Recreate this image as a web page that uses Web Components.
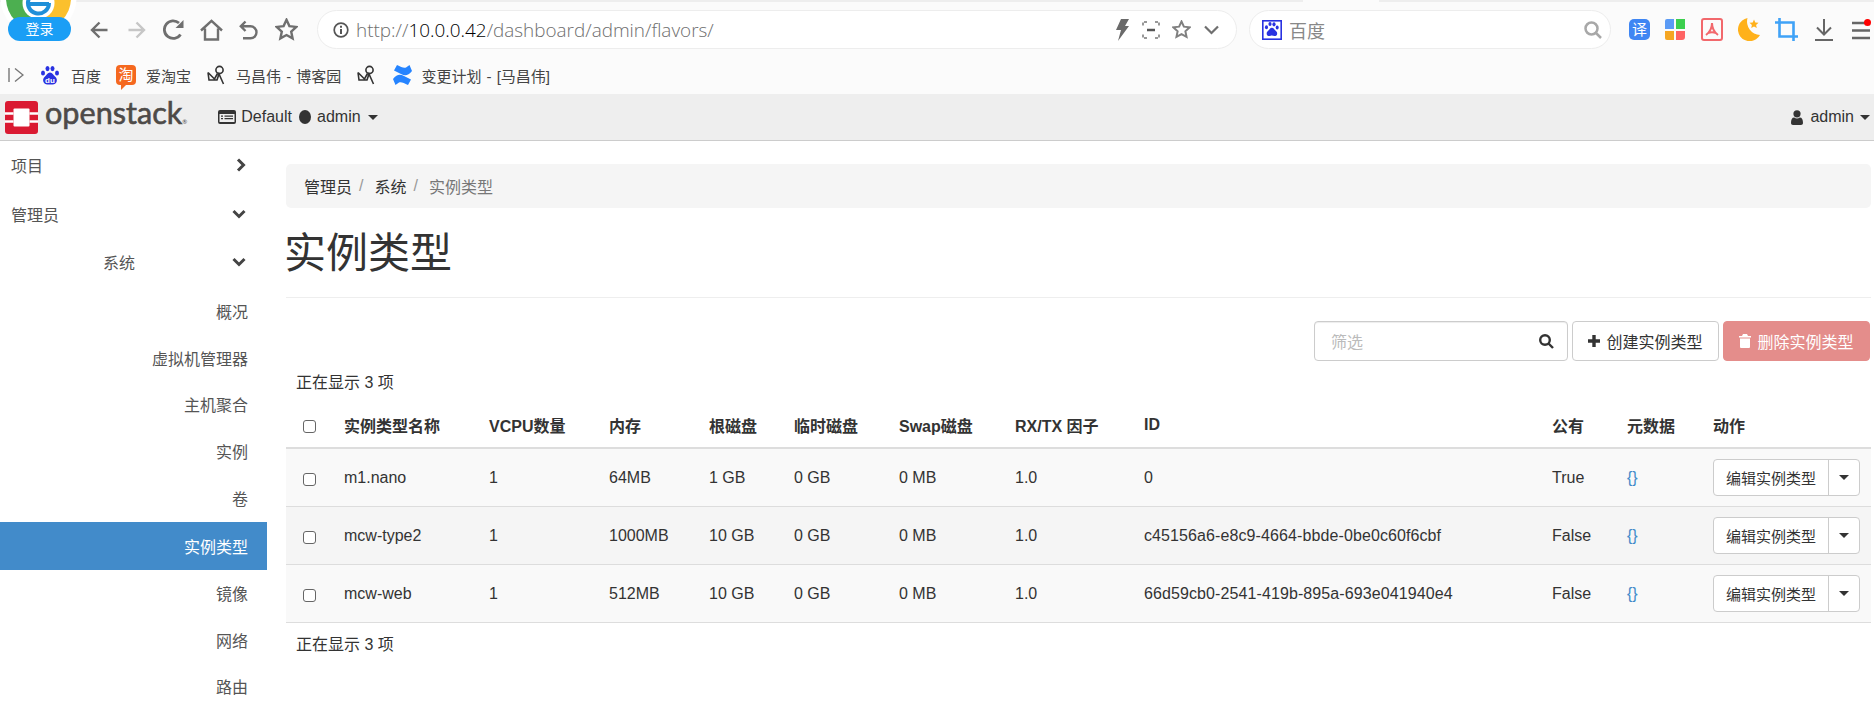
<!DOCTYPE html>
<html lang="zh-CN">

<head>
    <meta charset="UTF-8">
    <title>实例类型 - OpenStack Dashboard</title>
    <style>
        html, body { margin: 0; height: 705px; overflow: hidden; background: #fff; }
        body { font: 16px "Liberation Sans", "Noto Sans CJK SC", sans-serif; color: #333; }
        .page { display: flex; }
    </style>
</head>

<body>
    <browser-toolbar></browser-toolbar>
    <bookmark-bar></bookmark-bar>
    <os-navbar></os-navbar>
    <div class="page">
        <os-sidebar>
            <side-item level="1" chevron="right">项目</side-item>
            <side-item level="1" chevron="down">管理员</side-item>
            <side-item level="2" chevron="down">系统</side-item>
            <side-item>概况</side-item>
            <side-item>虚拟机管理器</side-item>
            <side-item>主机聚合</side-item>
            <side-item>实例</side-item>
            <side-item>卷</side-item>
            <side-item active>实例类型</side-item>
            <side-item>镜像</side-item>
            <side-item>网络</side-item>
            <side-item>路由</side-item>
        </os-sidebar>
        <flavor-page>
            <flavor-row name="m1.nano" mem="64MB" root="1 GB" eph="0 GB" swap="0 MB" rxtx="1.0" fid="0" pub="True"></flavor-row>
            <flavor-row name="mcw-type2" mem="1000MB" root="10 GB" eph="0 GB" swap="0 MB" rxtx="1.0" fid="c45156a6-e8c9-4664-bbde-0be0c60f6cbf" pub="False" hover></flavor-row>
            <flavor-row name="mcw-web" mem="512MB" root="10 GB" eph="0 GB" swap="0 MB" rxtx="1.0" fid="66d59cb0-2541-419b-895a-693e041940e4" pub="False"></flavor-row>
        </flavor-page>
    </div>

    <script>
        const SANS = '"Liberation Sans", "Noto Sans CJK SC", sans-serif';

        // 百度的爪子，工具栏用
        const PAW = `<ellipse cx="10" cy="5" rx="2" ry="2.6"/><ellipse cx="15" cy="5.4" rx="2" ry="2.6"/>
            <ellipse cx="5.6" cy="9" rx="1.9" ry="2.5"/><ellipse cx="19" cy="9.4" rx="1.9" ry="2.5"/>
            <path d="M12.4 9.6c-2.2 0-3 2.2-4.4 3.6-1.4 1.3-2.6 2.6-2 4.8.5 1.6 2 2.1 3.2 2 1.2-.1 2-.5 3.2-.5s2 .4 3.2.5c1.200.1 2.700-.4 3.200-2 .6-2.200-.6-3.500-2-4.800-1.400-1.400-2.200-3.600-4.400-3.600z"/>`;

        class BrowserToolbar extends HTMLElement {
            constructor() {
                super();
                const root = this.attachShadow({ mode: 'open' });
                root.innerHTML = `
                    <style>
                        :host { display: block; position: relative; height: 59px; background: #fbfbfb; box-sizing: border-box; border-top: 2px solid #eee; font-family: ${SANS}; }
                        .tab { position: absolute; left: 1303px; top: -2px; width: 76px; height: 2px; background: #fbfbfb; }
                        .row { display: flex; align-items: center; height: 57px; padding: 0 0 2px 90px; box-sizing: border-box; }
                        svg { display: block; flex: none; }
                        .nav { fill: none; stroke: #6f6f6f; stroke-width: 2.4; }
                        .pill { display: flex; align-items: center; height: 39px; box-sizing: border-box; border: 1px solid #ededed; border-radius: 20px; background: #fff; }
                        .url { width: 920px; margin-left: 19px; padding: 0 17px 0 15px; }
                        .addr { flex: 1; margin-left: 7px; font: 300 18.9px "Open Sans", "Liberation Sans", sans-serif; color: #6e6e6e; white-space: nowrap; }
                        .addr b { font-weight: 300; color: #000; }
                        .search { width: 362px; margin-left: 12px; padding: 0 8px 0 12px; }
                        .kw { flex: 1; margin-left: 7px; font-size: 18px; color: #888; }
                        .avatar { position: absolute; left: 0; top: -2px; }
                        .login { position: absolute; left: 8px; top: 15px; width: 63px; height: 24px; border-radius: 12px; background: #1a9ef5; color: #fff; font-size: 14px; line-height: 24px; text-align: center; }
                        .yi { width: 21px; height: 21px; border-radius: 5px; background: #3f86f3; color: #fff; font-size: 15px; line-height: 21px; text-align: center; }
                    </style>
                    <div class="tab"></div>
                    <svg class="avatar" width="78" height="24" viewBox="0 0 78 24">
                        <circle cx="38.500" cy="-2" r="38" fill="#fff"/>
                        <path d="M38.500-34.500a32.500 32.500 0 0 0 0 65z" fill="#4caf50"/>
                        <path d="M38.500-34.500a32.500 32.500 0 0 1 0 65z" fill="#fbc02d"/>
                        <circle cx="38.500" cy="3" r="16" fill="#fff"/>
                        <path d="M49-2a10.500 10.500 0 1 1-3.500-7.800M28-1h21" transform="translate(0 5)" fill="none" stroke="#1f8fd8" stroke-width="4"/>
                    </svg>
                    <div class="login">登录</div>
                    <div class="row">
                        <svg class="nav" width="18" height="18" viewBox="0 0 18 18"><path d="M17.500 9H2M9.500 1.500 2 9l7.500 7.500"/></svg>
                        <svg class="nav" style="margin-left:20px;stroke:#c6c6c6" width="18" height="18" viewBox="0 0 18 18"><path d="M.5 9H16M8.500 1.500 16 9l-7.500 7.500"/></svg>
                        <svg style="margin-left:17px" width="22" height="21" viewBox="0 0 22 21"><path d="M17.500 15.500A8.800 8.800 0 1 1 16 4" fill="none" stroke="#6f6f6f" stroke-width="2.800"/><path d="M20.500 1v8h-8z" fill="#6f6f6f"/></svg>
                        <svg class="nav" style="margin-left:15px" width="23" height="22" viewBox="0 0 23 22"><path d="M1 11.500 11.500 1.800 22 11.500M5 9.500v11h13v-11"/></svg>
                        <svg class="nav" style="margin-left:16px" width="19" height="20" viewBox="0 0 19 20"><path d="M6.500 1.500 1.800 6.300l4.700 4.700M2 6.300h9.500a6 6 0 0 1 0 12H4"/></svg>
                        <svg class="nav" style="margin-left:17px" width="23" height="23" viewBox="0 0 23 23"><path d="m11.500 1.800 2.900 6.300 6.900.8-5.100 4.700 1.400 6.800-6.100-3.400-6.100 3.400 1.400-6.800L1.700 8.900l6.900-.8z"/></svg>
                        <div class="pill url">
                            <svg width="16" height="16" viewBox="0 0 16 16"><circle cx="8" cy="8" r="6.800" fill="none" stroke="#555" stroke-width="1.700"/><path d="M7 7h2v5H7zM7 3.800h2v2H7z" fill="#555"/></svg>
                            <div class="addr">http://<b>10.0.0.42</b>/dashboard/admin/flavors/</div>
                            <svg width="13" height="22" viewBox="0 0 13 22"><path d="M5 0h8L9 7h4L2 22l3-11H0z" fill="#6a6a6a"/></svg>
                            <svg style="margin-left:13px" width="18" height="18" viewBox="0 0 18 18" fill="none" stroke="#777" stroke-width="1.500"><path d="M5 1H1v4M13 1h4v4M5 17H1v-4M13 17h4v-4" stroke-dasharray="3 1.500"/><path d="M5 9h8" stroke="#555" stroke-width="2.500"/></svg>
                            <svg style="margin-left:12px" width="19" height="19" viewBox="0 0 23 23" fill="none" stroke="#808080" stroke-width="2.400"><path d="m11.500 1.800 2.900 6.300 6.900.8-5.100 4.700 1.400 6.800-6.100-3.400-6.100 3.400 1.400-6.800L1.700 8.900l6.900-.8z"/></svg>
                            <svg style="margin-left:13px" width="15" height="10" viewBox="0 0 15 10" fill="none" stroke="#6f6f6f" stroke-width="2.200"><path d="m1 1.500 6.500 6.500L14 1.500"/></svg>
                        </div>
                        <div class="pill search">
                            <svg width="20" height="20" viewBox="0 0 25 25"><rect x="1" y="1" width="23" height="23" fill="#fff" stroke="#2932e1" stroke-width="2"/><g fill="#2932e1">${PAW}</g></svg>
                            <div class="kw">百度</div>
                            <svg width="18" height="18" viewBox="0 0 18 18" fill="none" stroke="#a8a8a8" stroke-width="2.500"><circle cx="7.500" cy="7.500" r="6"/><path d="m12 12 5 5"/></svg>
                        </div>
                        <div class="yi" style="margin-left:18px">译</div>
                        <svg style="margin-left:15px" width="20" height="21" viewBox="0 0 20 21"><path d="M2 0h7v10H0V2a2 2 0 0 1 2-2z" fill="#5b9bf5"/><path d="M11 0h9v10h-9z" fill="#3ccf4e"/><path d="M0 12h9v9H2a2 2 0 0 1-2-2z" fill="#f5a623"/><path d="M11 12h9v6a3 3 0 0 1-3 3h-6z" fill="#ff6464"/></svg>
                        <svg style="margin-left:16px" width="22" height="23" viewBox="0 0 22 23" fill="none" stroke="#f2686c"><rect x="1" y="1" width="20" height="21" rx="2" stroke-width="2"/><path d="M11 5c0 5-2 9-6 12M11 5c0 5 2 9 6 12M7 15c3-1 5-1 8 0" stroke-width="2"/></svg>
                        <svg style="margin-left:15px" width="22" height="23" viewBox="0 0 22 23"><path d="M9.500 0a11.700 11.700 0 1 0 12.500 17A13.500 13.500 0 0 1 9.500 0z" fill="#ffb11b"/><path d="m16 1.500 1.300 3 3.200.3-2.400 2.100.7 3.100-2.800-1.600-2.800 1.600.7-3.100-2.400-2.100 3.200-.3z" fill="#ffb11b"/></svg>
                        <svg style="margin-left:15px" width="23" height="23" viewBox="0 0 23 23" fill="none" stroke="#3fa2f7" stroke-width="2.600"><path d="M0 4.500h18.500V23"/><path d="M4.500 0v18.500H23"/></svg>
                        <svg style="margin-left:17px" width="18" height="22" viewBox="0 0 18 22" fill="none" stroke="#666" stroke-width="2"><path d="M9 0v15M2 8.500 9 15.500l7-7"/><path d="M0 21h18"/></svg>
                        <svg style="margin-left:19px" width="20" height="22" viewBox="0 0 20 22"><path d="M0 4h14M0 11.500h18M0 19h18" stroke="#666" stroke-width="2.500"/><circle cx="15.500" cy="3.500" r="3.500" fill="#f00"/></svg>
                    </div>
                `;
            }
        }
        customElements.define('browser-toolbar', BrowserToolbar);

        class BookmarkBar extends HTMLElement {
            constructor() {
                super();
                const bird = `<svg width="19" height="20" viewBox="0 0 19 20" fill="none" stroke="#333" stroke-width="1.600"><circle cx="12.500" cy="5" r="3.600"/><path d="M1 7.500 7.500 14 10.500 8.500M1 7.500 2 15h8l2-6 4.500 10"/></svg>`;
                const root = this.attachShadow({ mode: 'open' });
                root.innerHTML = `
                    <style>
                        :host { display: flex; align-items: center; height: 35px; box-sizing: border-box; padding: 0 0 3px 8px; background: #fbfbfb; font: 15px ${SANS}; color: #444; word-spacing: 1px; }
                        svg { display: block; flex: none; }
                        span { white-space: nowrap; }
                        .tao { position: relative; width: 20px; height: 20px; margin-left: 15px; border-radius: 4px; background: #f5681f; color: #fff; font-size: 15px; line-height: 20px; text-align: center; }
                        .tao::after { content: ""; position: absolute; left: 5px; top: 19px; border: 3px solid transparent; border-top-color: #f5681f; border-left-color: #f5681f; }
                    </style>
                    <svg width="16" height="16" viewBox="0 0 16 16" fill="none" stroke="#777" stroke-width="1.400"><path d="M1 1v14M7 1.500 15 8l-8 6.500"/></svg>
                    <svg style="margin-left:17px" width="18" height="19" viewBox="0 0 18 19" fill="#2932e1">
                        <ellipse cx="6.500" cy="2.600" rx="2" ry="2.600"/><ellipse cx="11.500" cy="2.600" rx="2" ry="2.600"/>
                        <ellipse cx="2" cy="7" rx="2" ry="2.500"/><ellipse cx="16" cy="7" rx="2" ry="2.500"/>
                        <path d="M9 6.500c-2.500 0-3.300 2.400-5 4-1.500 1.400-2.300 3-1.700 5 .6 2 2.300 3 4 3h5.400c1.700 0 3.400-1 4-3 .6-2-.2-3.600-1.700-5-1.700-1.600-2.500-4-5-4z"/>
                        <text x="9" y="16.500" text-anchor="middle" fill="#fff" font-size="8" font-weight="700" font-family="Liberation Sans, sans-serif" word-spacing="0">du</text>
                    </svg>
                    <span style="margin-left:12px">百度</span>
                    <div class="tao">淘</div>
                    <span style="margin-left:10px">爱淘宝</span>
                    <span style="margin-left:16px;display:block">${bird}</span>
                    <span style="margin-left:10px">马昌伟 - 博客园</span>
                    <span style="margin-left:16px;display:block">${bird}</span>
                    <svg style="margin-left:16px" width="21" height="22" viewBox="0 0 21 22" fill="#2684ff"><path d="M1 15c4-5 7-5 11-3l7 3.500-3 5.500c-4-2-7-3.500-9-2.500L3.500 21z"/><path d="M20 7c-4 5-7 5-11 3L2 6.500 5 1c4 2 7 3.500 9 2.500L17.500 1z"/></svg>
                    <span style="margin-left:8px">变更计划 - [马昌伟]</span>
                `;
            }
        }
        customElements.define('bookmark-bar', BookmarkBar);

        class OsNavbar extends HTMLElement {
            constructor() {
                super();
                const root = this.attachShadow({ mode: 'open' });
                root.innerHTML = `
                    <style>
                        :host { display: flex; align-items: center; height: 47px; box-sizing: border-box; padding: 0 4px 0 5px; background: #eee; border-bottom: 1px solid #ccc; font: 16px ${SANS}; color: #333; }
                        svg { display: block; flex: none; }
                        .brand { margin-left: 7px; font: 400 30.6px Lato, "Open Sans", sans-serif; color: #4d4a48; -webkit-text-stroke: .6px #4d4a48; line-height: 47px; white-space: nowrap; }
                        .brand sup { font-size: 6px; vertical-align: baseline; -webkit-text-stroke: 0; }
                        .dot { width: 12px; height: 14px; margin: 0 6px 0 7px; border-radius: 50%; background: #333; }
                        .caret { width: 0; height: 0; margin-left: 7px; border: 5px solid transparent; border-top-color: #333; border-bottom: 0; }
                        .grow { flex: 1; }
                    </style>
                    <svg width="33" height="33" viewBox="0 0 33 33">
                        <rect width="33" height="33" rx="3" fill="#da1a32"/>
                        <rect x="8.500" y="7.500" width="16" height="18" rx="1" fill="#fff"/>
                        <path d="M0 12.500h8.500M0 20.500h8.500M24.500 12.500H33M24.500 20.500H33" stroke="#fff" stroke-width="2.400"/>
                    </svg>
                    <span class="brand">openstack<sup>®</sup></span>
                    <svg style="margin-left:31px" width="18" height="14" viewBox="0 0 18 14" fill="#333"><path d="M0 2a2 2 0 0 1 2-2h14a2 2 0 0 1 2 2v10a2 2 0 0 1-2 2H2a2 2 0 0 1-2-2zm1.500 2v8h15V4zM3 5.500h2v1.300H3zm3.500 0H15v1.300H6.500zM3 8h2v1.300H3zm3.500 0H15v1.300H6.500z"/></svg>
                    <span style="margin-left:5px">Default</span>
                    <span class="dot"></span>
                    <span>admin</span>
                    <span class="caret"></span>
                    <span class="grow"></span>
                    <svg width="12" height="15" viewBox="0 0 12 15" fill="#333"><circle cx="6" cy="3.800" r="3.600"/><path d="M0 13c0-3.500 1-5.500 3.200-5.500 1.600 1.200 4 1.200 5.600 0C11 7.500 12 9.500 12 13c0 1.300-.8 2-2 2H2c-1.200 0-2-.7-2-2z"/></svg>
                    <span style="margin-left:7px">admin</span>
                    <span class="caret" style="margin-left:6px"></span>
                `;
            }
        }
        customElements.define('os-navbar', OsNavbar);

        class OsSidebar extends HTMLElement {
            constructor() {
                super();
                this.attachShadow({ mode: 'open' }).innerHTML = `
                    <style>:host { display: block; flex: none; width: 267px; height: 564px; overflow: hidden; }</style>
                    <slot></slot>
                `;
            }
        }
        customElements.define('os-sidebar', OsSidebar);

        class SideItem extends HTMLElement {
            constructor() {
                super();
                const chevron = this.getAttribute('chevron');
                const icons = {
                    right: '<svg width="10" height="14" viewBox="0 0 10 14"><path d="M2 1.500 7.500 7 2 12.500" fill="none" stroke="#444" stroke-width="3"/></svg>',
                    down: '<svg width="14" height="10" viewBox="0 0 14 10"><path d="M1.500 2 7 7.500 12.500 2" fill="none" stroke="#444" stroke-width="3"/></svg>'
                };
                this.attachShadow({ mode: 'open' }).innerHTML = `
                    <style>
                        :host { display: flex; align-items: center; height: 46.8px; box-sizing: border-box; padding: 0 19px 1px 11px; font-size: 16px; color: #555; justify-content: flex-end; }
                        :host([level="1"]), :host([level="2"]) { height: 49px; padding-bottom: 2px; justify-content: space-between; padding-right: 21px; }
                        :host([level="2"]) { padding-left: 103px; padding-bottom: 3px; }
                        :host([active]) { height: 48px; padding-bottom: 0; background: #428bca; color: #fff; }
                        svg { display: block; }
                    </style>
                    <span><slot></slot></span>
                    ${chevron ? icons[chevron] : ''}
                `;
            }
        }
        customElements.define('side-item', SideItem);

        class FlavorPage extends HTMLElement {
            constructor() {
                super();
                const hd = ['实例类型名称', 'VCPU数量', '内存', '根磁盘', '临时磁盘', 'Swap磁盘', 'RX/TX 因子', 'ID', '公有', '元数据', '动作'];
                this.attachShadow({ mode: 'open' }).innerHTML = `
                    <style>
                        :host { display: block; flex: 1; min-width: 0; padding: 23px 3px 0 19px; font-size: 16px; color: #333;
                            --flavor-cols: 58px 145px 120px 100px 85px 105px 116px 129px 408px 75px 86px 1fr; }
                        .crumb { display: flex; align-items: center; height: 44px; padding-left: 18px; border-radius: 5px; background: #f5f5f5; }
                        .crumb i { font-style: normal; color: #999; padding: 0 11px 0 7px; }
                        .crumb .cur { color: #777; }
                        h1 { margin: 0; height: 89px; border-bottom: 1px solid #eee; font-size: 42px; font-weight: 400; line-height: 91px; text-indent: -2px; }
                        .actions { display: flex; justify-content: flex-end; gap: 4px; margin: 23px 1px 0 0; }
                        .filter { display: flex; align-items: center; justify-content: space-between; width: 254px; height: 40px; box-sizing: border-box; margin-right: 0; padding: 0 13px 0 16px; border: 1px solid #ccc; border-radius: 4px; color: #bbb; box-shadow: inset 0 1px 1px rgba(0,0,0,.075); }
                        .btn { display: flex; align-items: center; justify-content: center; gap: 6px; width: 147px; height: 40px; box-sizing: border-box; border: 1px solid #ccc; border-radius: 4px; background: #fff; }
                        .btn.danger { background: #e48d8b; border-color: #e48d8b; color: #fff; gap: 6px; }
                        svg { display: block; }
                        .count { height: 22px; line-height: 22px; padding-left: 10px; }
                        .top { margin-top: 11px; }
                        .thead { display: grid; grid-template-columns: var(--flavor-cols); align-items: center; height: 44px; padding-top: 9px; border-bottom: 2px solid #ddd; font-weight: 700; }
                        .check { width: 13px; height: 13px; margin: 3px 0 0 17px; box-sizing: border-box; appearance: none; border: 1.500px solid #666; border-radius: 3px; background: #fff; }
                        .bottom { margin-top: 11px; }
                    </style>
                    <div class="crumb"><span>管理员</span><i>/</i><span>系统</span><i>/</i><span class="cur">实例类型</span></div>
                    <h1>实例类型</h1>
                    <div class="actions">
                        <div class="filter"><span>筛选</span><svg width="15" height="15" viewBox="0 0 15 15" fill="none" stroke="#333" stroke-width="2.400"><circle cx="6" cy="6" r="4.800"/><path d="m9.500 9.500 4.500 4.500"/></svg></div>
                        <div class="btn"><svg width="12" height="12" viewBox="0 0 12 12" fill="#333"><path d="M4.300 0h3.400v4.300H12v3.400H7.700V12H4.300V7.700H0V4.300h4.300z"/></svg><span>创建实例类型</span></div>
                        <div class="btn danger"><svg width="12" height="14" viewBox="0 0 12 14" fill="#fff"><path d="M4 0h4l1 2h3v1.500H0V2h3zM1 4.500h10V13a1 1 0 0 1-1 1H2a1 1 0 0 1-1-1z"/></svg><span>删除实例类型</span></div>
                    </div>
                    <div class="count top">正在显示 3 项</div>
                    <div class="thead">
                        <input class="check" type="checkbox">
                        ${hd.map(h => `<span>${h}</span>`).join('')}
                    </div>
                    <slot></slot>
                    <div class="count bottom">正在显示 3 项</div>
                `;
            }
        }
        customElements.define('flavor-page', FlavorPage);

        class FlavorRow extends HTMLElement {
            constructor() {
                super();
                const a = n => this.getAttribute(n);
                this.attachShadow({ mode: 'open' }).innerHTML = `
                    <style>
                        :host { display: grid; grid-template-columns: var(--flavor-cols); align-items: center; height: 58px; box-sizing: border-box; border-bottom: 1px solid #ddd; background: #f9f9f9; }
                        :host([hover]) { background: #f5f5f5; }
                        .check { width: 13px; height: 13px; margin: 3px 0 0 17px; box-sizing: border-box; appearance: none; border: 1.500px solid #666; border-radius: 3px; background: #fff; }
                        a { color: #428bca; text-decoration: none; }
                        .fid { letter-spacing: .1px; }
                    </style>
                    <input class="check" type="checkbox">
                    <span>${a('name')}</span><span>1</span><span>${a('mem')}</span><span>${a('root')}</span><span>${a('eph')}</span>
                    <span>${a('swap')}</span><span>${a('rxtx')}</span><span class="fid">${a('fid')}</span><span>${a('pub')}</span>
                    <a href="#">{}</a>
                    <action-button>编辑实例类型</action-button>
                `;
            }
        }
        customElements.define('flavor-row', FlavorRow);

        class ActionButton extends HTMLElement {
            constructor() {
                super();
                this.attachShadow({ mode: 'open' }).innerHTML = `
                    <style>
                        :host { display: flex; width: 147px; height: 37px; box-sizing: border-box; border: 1px solid #ccc; border-radius: 4px; background: #fff; font-size: 15px; color: #333; }
                        .label { flex: 1; display: flex; align-items: center; justify-content: center; border-right: 1px solid #ccc; }
                        .more { display: flex; align-items: center; justify-content: center; width: 30px; }
                        .more::before { content: ""; border: 5px solid transparent; border-top-color: #333; border-bottom: 0; }
                    </style>
                    <div class="label"><slot></slot></div>
                    <div class="more"></div>
                `;
            }
        }
        customElements.define('action-button', ActionButton);
    </script>
</body>

</html>
